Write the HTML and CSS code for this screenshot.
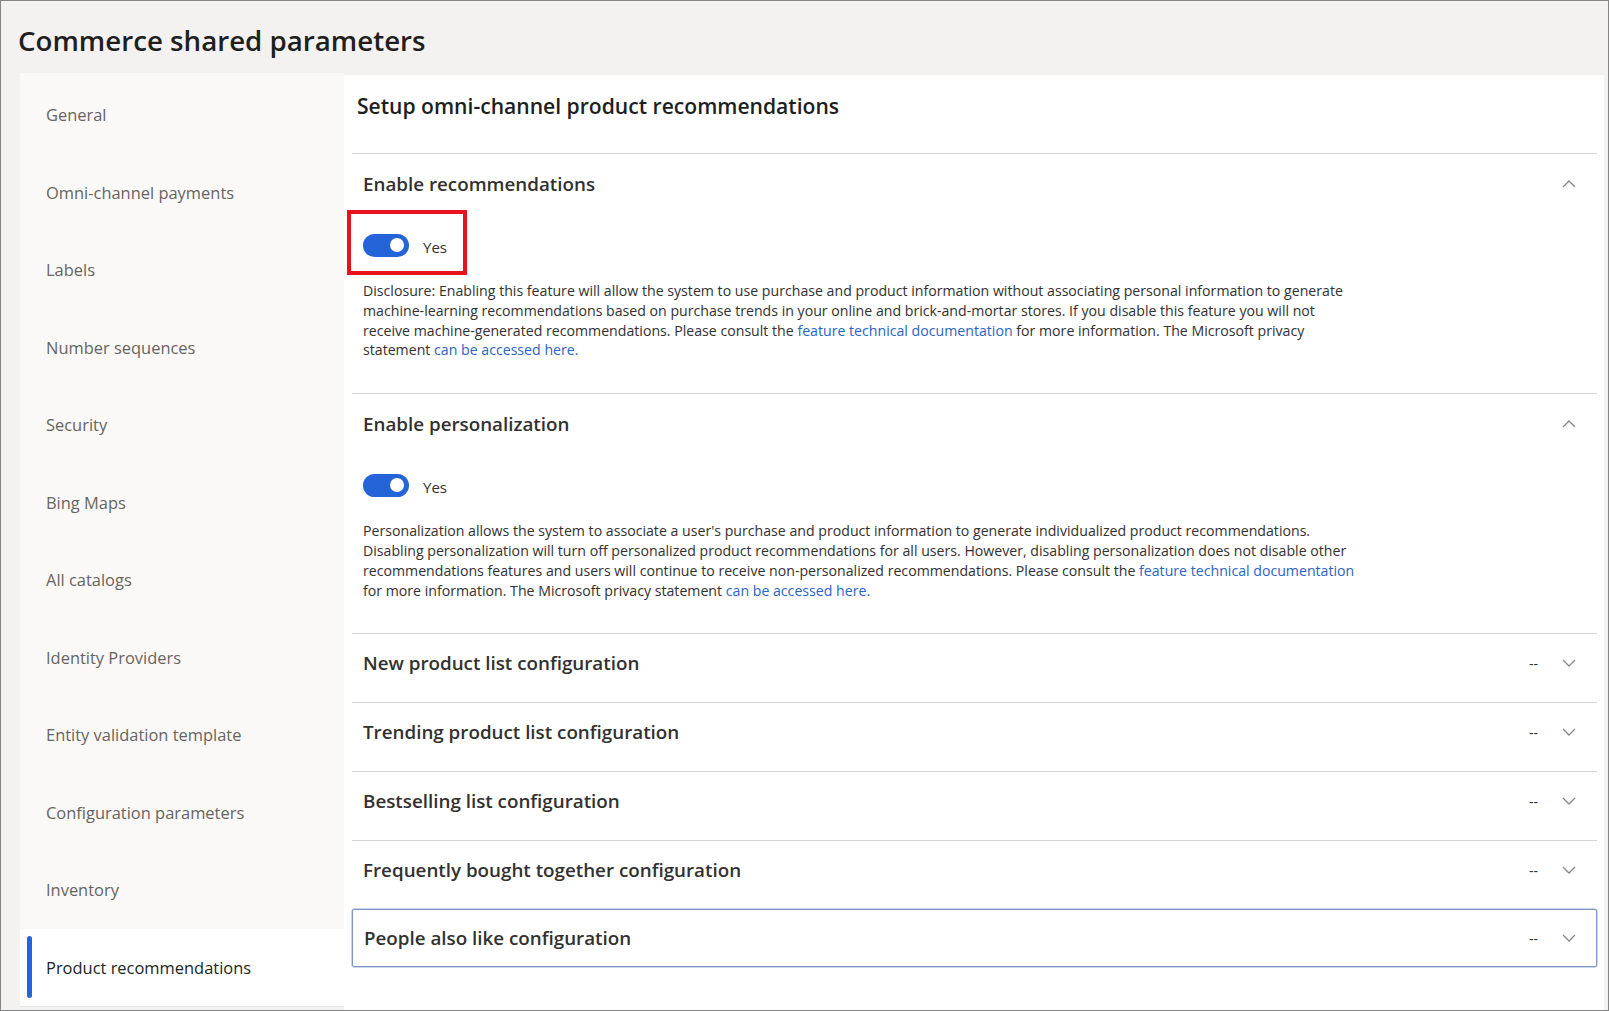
FILE: index.html
```html
<!DOCTYPE html>
<html lang="en">
<head>
<meta charset="utf-8">
<title>Commerce shared parameters</title>
<link rel="stylesheet" href="styles.css">
</head>
<body>
<div class="frame">
  <header class="page-head">
    <h1 class="page-title">Commerce shared parameters</h1>
  </header>
  <div class="layout">
    <nav class="nav">
      <a class="nav-item">General</a>
      <a class="nav-item">Omni-channel payments</a>
      <a class="nav-item">Labels</a>
      <a class="nav-item">Number sequences</a>
      <a class="nav-item">Security</a>
      <a class="nav-item">Bing Maps</a>
      <a class="nav-item">All catalogs</a>
      <a class="nav-item">Identity Providers</a>
      <a class="nav-item">Entity validation template</a>
      <a class="nav-item">Configuration parameters</a>
      <a class="nav-item">Inventory</a>
      <a class="nav-item active"><span class="nav-bar"></span>Product recommendations</a>
    </nav>
    <main class="main">
      <h2 class="main-title">Setup omni-channel product recommendations</h2>
      <div class="sections">
        <section class="sec open">
          <div class="sec-head">
            <span class="sec-title">Enable recommendations</span>
            <span class="sec-tail">
              <svg class="chev" width="14" height="8" viewBox="0 0 14 8"><path d="M1 7 L7 1 L13 7" fill="none" stroke="#8a8886" stroke-width="1.3"/></svg>
            </span>
          </div>
          <div class="toggle-row">
            <span class="highlight"></span>
            <span class="toggle"><span class="knob"></span></span>
            <span class="toggle-label">Yes</span>
          </div>
          <p class="desc">Disclosure: Enabling this feature will allow the system to use purchase and product information without associating personal information to generate<br>machine-learning recommendations based on purchase trends in your online and brick-and-mortar stores. If you disable this feature you will not<br>receive machine-generated recommendations. Please consult the <a class="link">feature technical documentation</a> for more information. The Microsoft privacy<br>statement <a class="link">can be accessed here.</a></p>
        </section>
        <section class="sec open">
          <div class="sec-head">
            <span class="sec-title">Enable personalization</span>
            <span class="sec-tail">
              <svg class="chev" width="14" height="8" viewBox="0 0 14 8"><path d="M1 7 L7 1 L13 7" fill="none" stroke="#8a8886" stroke-width="1.3"/></svg>
            </span>
          </div>
          <div class="toggle-row">
            <span class="toggle"><span class="knob"></span></span>
            <span class="toggle-label">Yes</span>
          </div>
          <p class="desc">Personalization allows the system to associate a user's purchase and product information to generate individualized product recommendations.<br>Disabling personalization will turn off personalized product recommendations for all users. However, disabling personalization does not disable other<br>recommendations features and users will continue to receive non-personalized recommendations. Please consult the <a class="link">feature technical documentation</a><br>for more information. The Microsoft privacy statement <a class="link">can be accessed here.</a></p>
        </section>
        <section class="sec closed">
          <div class="sec-head">
            <span class="sec-title">New product list configuration</span>
            <span class="sec-tail"><span class="dash">--</span>
              <svg class="chev" width="14" height="8" viewBox="0 0 14 8"><path d="M1 1 L7 7 L13 1" fill="none" stroke="#8a8886" stroke-width="1.3"/></svg>
            </span>
          </div>
        </section>
        <section class="sec closed">
          <div class="sec-head">
            <span class="sec-title">Trending product list configuration</span>
            <span class="sec-tail"><span class="dash">--</span>
              <svg class="chev" width="14" height="8" viewBox="0 0 14 8"><path d="M1 1 L7 7 L13 1" fill="none" stroke="#8a8886" stroke-width="1.3"/></svg>
            </span>
          </div>
        </section>
        <section class="sec closed">
          <div class="sec-head">
            <span class="sec-title">Bestselling list configuration</span>
            <span class="sec-tail"><span class="dash">--</span>
              <svg class="chev" width="14" height="8" viewBox="0 0 14 8"><path d="M1 1 L7 7 L13 1" fill="none" stroke="#8a8886" stroke-width="1.3"/></svg>
            </span>
          </div>
        </section>
        <section class="sec closed">
          <div class="sec-head">
            <span class="sec-title">Frequently bought together configuration</span>
            <span class="sec-tail"><span class="dash">--</span>
              <svg class="chev" width="14" height="8" viewBox="0 0 14 8"><path d="M1 1 L7 7 L13 1" fill="none" stroke="#8a8886" stroke-width="1.3"/></svg>
            </span>
          </div>
        </section>
        <section class="sec focused">
          <div class="sec-head">
            <span class="sec-title">People also like configuration</span>
            <span class="sec-tail"><span class="dash">--</span>
              <svg class="chev" width="14" height="8" viewBox="0 0 14 8"><path d="M1 1 L7 7 L13 1" fill="none" stroke="#8a8886" stroke-width="1.3"/></svg>
            </span>
          </div>
        </section>
      </div>
    </main>
  </div>
</div>
</body>
</html>
```

FILE: styles.css
```css
* { box-sizing: border-box; }
html, body { margin: 0; padding: 0; }
body {
  font-family: "Open Sans", "Noto Sans", sans-serif;
  color: #323130;
  background: #ffffff;
}
.frame {
  width: 1609px;
  height: 1011px;
  border: 1px solid #858585;
  background: #f3f2f1;
  display: flex;
  flex-direction: column;
  overflow: hidden;
}
.page-head {
  height: 72px;
  flex: none;
  display: flex;
  align-items: center;
  padding-left: 17px;
}
.page-title {
  margin: 0;
  font-size: 27.7px;
  font-weight: 600;
  color: #201f1e;
  line-height: 36px;
  padding-top: 5px;
}
.layout {
  flex: 1;
  display: flex;
  padding: 0 4px 0 19px;
  min-height: 0;
}
.nav {
  width: 324px;
  flex: none;
  background: #faf9f8;
  padding-top: 3px;
  display: flex;
  flex-direction: column;
  align-self: flex-start;
  border-bottom: 1px solid #e8e6e4;
}
.nav-item {
  position: relative;
  height: 77.5px;
  display: flex;
  align-items: center;
  padding-left: 26px;
  font-size: 16.45px;
  color: #66645f;
}
.nav-item.active {
  background: #ffffff;
  color: #201f1e;
}
.nav-bar {
  position: absolute;
  left: 7px;
  top: 7px;
  bottom: 8px;
  width: 5px;
  border-radius: 3px;
  background: #2563d9;
}
.main {
  flex: 1;
  background: #ffffff;
  margin-top: 2px;
  display: flex;
  flex-direction: column;
}
.main-title {
  margin: 0;
  height: 78px;
  padding: 17px 0 0 13px;
  font-size: 21.1px;
  line-height: 28px;
  font-weight: 600;
  color: #201f1e;
}
.sections {
  margin: 0 7px 0 8px;
}
.sec {
  border-top: 1px solid #d6d4d2;
}
.sec-head {
  height: 60px;
  display: flex;
  align-items: center;
  justify-content: space-between;
  padding: 0 21px 0 11px;
}
.sec-title {
  font-size: 18.8px;
  font-weight: 600;
  color: #323130;
}
.sec-tail {
  display: flex;
  align-items: center;
  gap: 24px;
}
.dash {
  font-size: 14px;
  color: #323130;
}
.chev { display: block; }
.closed { padding-bottom: 10px; }
.closed .sec-head { height: 58px; }
.focused {
  border: 1px solid #7f95c4;
  border-radius: 2px;
  box-shadow: 0 0 0 0.5px #9aaed6;
}
.focused .sec-head {
  height: 56px;
  padding-right: 20px;
}
.toggle-row {
  position: relative;
  height: 62px;
  display: flex;
  align-items: center;
  padding-left: 11px;
}
.toggle {
  width: 46px;
  height: 23px;
  border-radius: 12px;
  background: #2563d9;
  position: relative;
  flex: none;
}
.knob {
  position: absolute;
  right: 5px;
  top: 4.5px;
  width: 14px;
  height: 14px;
  border-radius: 50%;
  background: #ffffff;
}
.toggle-label {
  margin-left: 14px;
  font-size: 15px;
  color: #323130;
  padding-top: 3px;
}
.highlight {
  position: absolute;
  left: -5px;
  top: -4px;
  width: 120px;
  height: 65px;
  border: 4px solid #e8111e;
}
.desc {
  margin: 5px 0 0 0;
  padding: 0 0 33px 11px;
  font-size: 14.15px;
  line-height: 19.8px;
  white-space: nowrap;
  color: #323130;
}
.link { color: #2a64c4; }
```
